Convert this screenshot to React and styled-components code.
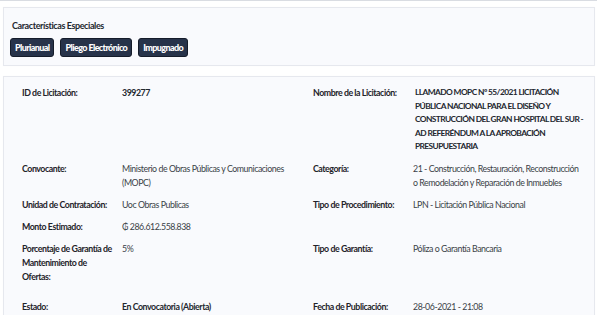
import React from "react";
import styled, { createGlobalStyle } from "styled-components";

const Global = createGlobalStyle`
  html, body { margin: 0; padding: 0; background: #ffffff; }
  body { font-family: Lato, "Open Sans", "Noto Sans", sans-serif; color: #2b2f36; }
`;

const Page = styled.div`
  width: 600px;
  height: 315px;
  overflow: hidden;
  display: flex;
  flex-direction: column;
`;

const TopBar = styled.div`
  height: 4px;
  width: 597px;
  background: #0c1526;
  border-bottom: 1px solid #d9dce2;
`;

const Content = styled.div`
  display: flex;
  flex-direction: column;
  gap: 10px;
  padding: 6px 5px 0 3px;
`;

const Panel = styled.section`
  background: #f9fafd;
  border: 1px solid #e6e8ee;
  box-shadow: 0 0 1px rgba(0, 0, 0, 0.04);
`;

const FeaturesPanel = styled(Panel)`
  padding: 11px 8px 8px 6px;
  display: flex;
  flex-direction: column;
  gap: 5px;
`;

const Title = styled.h3`
  margin: 0;
  padding: 0 2px;
  font-size: 9px;
  line-height: 14px;
  font-weight: 700;
  letter-spacing: -0.4px;
  color: #23272f;
`;

const BadgeRow = styled.div`
  display: flex;
  gap: 6px;
`;

const Badge = styled.span`
  display: inline-flex;
  align-items: center;
  height: 17px;
  padding: 0 4px;
  background: #27334a;
  border: 1px solid #151c2a;
  border-radius: 3px;
  color: #ffffff;
  font-size: 9px;
  font-weight: 900;
  letter-spacing: -0.6px;
`;

const DetailsPanel = styled(Panel)`
  padding: 9px 4px 20px 18px;
  flex: 1;
`;

const Grid = styled.dl`
  margin: 0;
  display: grid;
  grid-template-columns: 100px 191px 100px 1fr;
  row-gap: 8.5px;
  font-size: 8.8px;
  line-height: 13.6px;
  letter-spacing: -0.45px;
`;

const Label = styled.dt`
  margin: 0;
  font-weight: 700;
  color: #1f232a;
  margin-top: ${(p) => (p.$spaced ? "8px" : "0")};
`;

const Value = styled.dd`
  margin: 0;
  font-weight: ${(p) => (p.$bold ? 700 : 400)};
  color: ${(p) => (p.$bold ? "#23272f" : "#3a3f47")};
  margin-top: ${(p) => (p.$spaced ? "8px" : "0")};
`;

const TitleValue = styled.dd`
  margin: 0;
  padding-left: 2px;
  font-size: 8.4px;
  font-weight: 700;
  letter-spacing: -0.6px;
  color: #23272f;
`;

const Line = styled.span`
  display: block;
  white-space: nowrap;
`;

const Empty = styled.div``;

export default function App() {
  return (
    <Page>
      <Global />
      <TopBar />
      <Content>
        <FeaturesPanel>
          <Title>Características Especiales</Title>
          <BadgeRow>
            <Badge>Plurianual</Badge>
            <Badge>Pliego Electrónico</Badge>
            <Badge>Impugnado</Badge>
          </BadgeRow>
        </FeaturesPanel>
        <DetailsPanel>
          <Grid>
            <Label>ID de Licitación:</Label>
            <Value $bold>399277</Value>
            <Label>Nombre de la Licitación:</Label>
            <TitleValue>
              <Line>LLAMADO MOPC Nº 55/2021 LICITACIÓN</Line>
              <Line>PÚBLICA NACIONAL PARA EL DISEÑO Y</Line>
              <Line>CONSTRUCCIÓN DEL GRAN HOSPITAL DEL SUR -</Line>
              <Line>AD REFERÉNDUM A LA APROBACIÓN</Line>
              <Line>PRESUPUESTARIA</Line>
            </TitleValue>

            <Label>Convocante:</Label>
            <Value>
              <Line>Ministerio de Obras Públicas y Comunicaciones</Line>
              <Line>(MOPC)</Line>
            </Value>
            <Label>Categoría:</Label>
            <Value>
              <Line>21 - Construcción, Restauración, Reconstrucción</Line>
              <Line>o Remodelación y Reparación de Inmuebles</Line>
            </Value>

            <Label>Unidad de Contratación:</Label>
            <Value>Uoc Obras Publicas</Value>
            <Label>Tipo de Procedimiento:</Label>
            <Value>LPN - Licitación Pública Nacional</Value>

            <Label>Monto Estimado:</Label>
            <Value>₲ 286.612.558.838</Value>
            <Empty />
            <Empty />

            <Label>
              <Line>Porcentaje de Garantía de</Line>
              <Line>Mantenimiento de</Line>
              <Line>Ofertas:</Line>
            </Label>
            <Value>5%</Value>
            <Label>Tipo de Garantía:</Label>
            <Value>Póliza o Garantía Bancaria</Value>

            <Label $spaced>Estado:</Label>
            <Value $bold $spaced>En Convocatoria (Abierta)</Value>
            <Label $spaced>Fecha de Publicación:</Label>
            <Value $spaced>28-06-2021 - 21:08</Value>
          </Grid>
        </DetailsPanel>
      </Content>
    </Page>
  );
}
